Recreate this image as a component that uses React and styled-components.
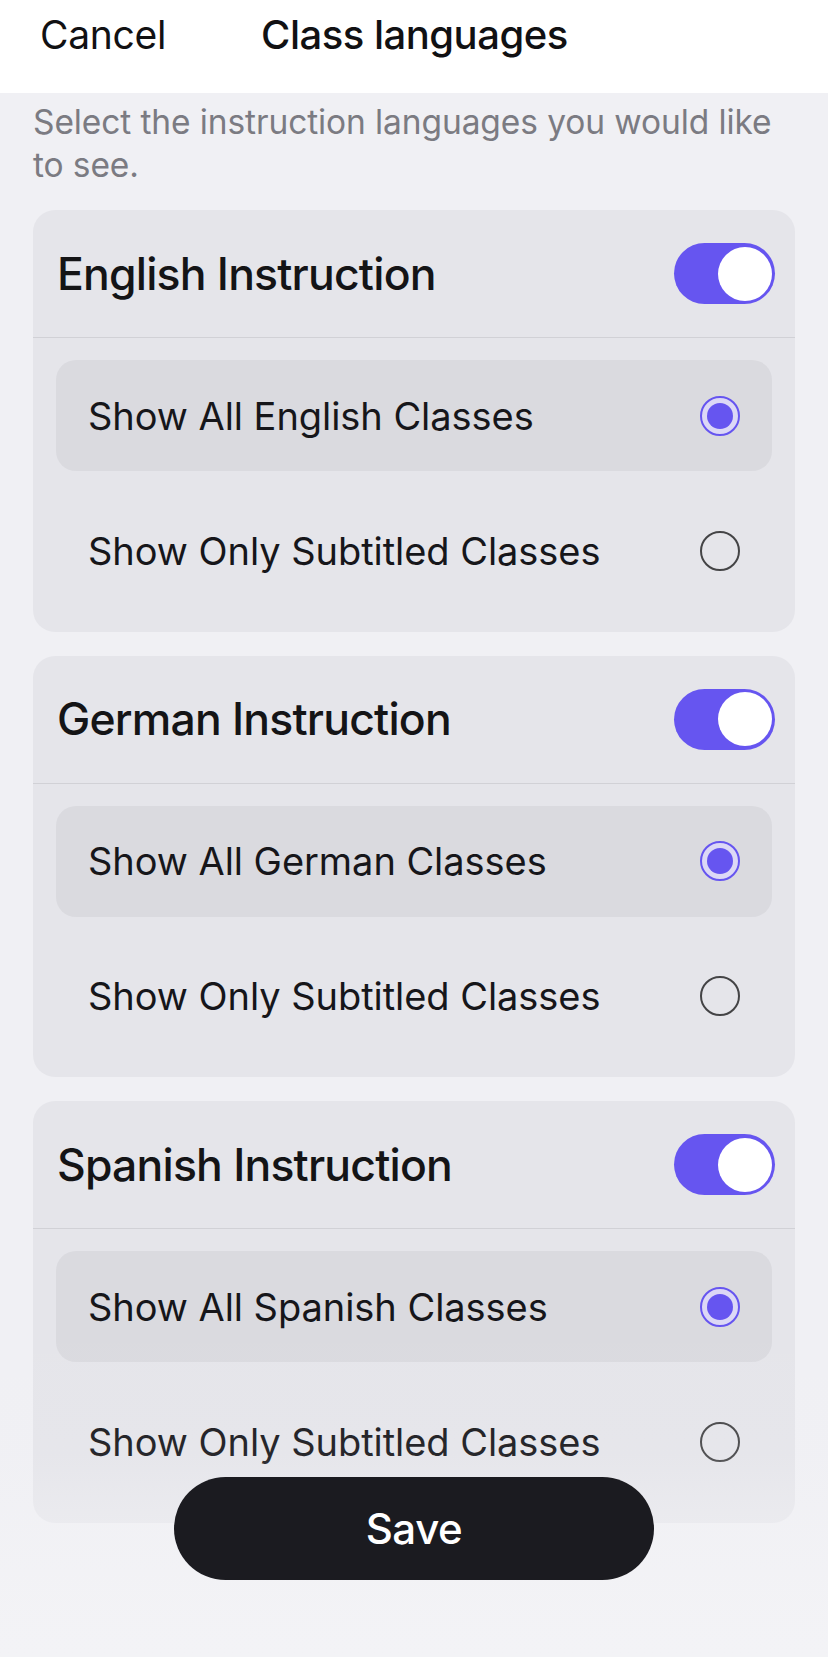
import React, { useState } from "react";
import styled, { createGlobalStyle } from "styled-components";

const GlobalStyle = createGlobalStyle`
  html, body { margin: 0; padding: 0; background: #f0f0f4; }
  body { font-family: Inter, "Noto Sans", "Liberation Sans", sans-serif; -webkit-font-smoothing: antialiased; }
  * { box-sizing: border-box; }
`;

const Screen = styled.div`
  position: relative;
  min-height: 1657px;
  background: #f0f0f4;
  overflow: hidden;
`;

const TopBar = styled.header`
  height: 93px;
  background: #ffffff;
  display: flex;
  align-items: flex-start;
  padding: 11px 0 0 40px;
  gap: 95px;
`;

const CancelButton = styled.button`
  border: 0;
  background: none;
  padding: 0;
  font-family: inherit;
  font-size: 39px;
  font-weight: 400;
  line-height: 48px;
  color: #111113;
  letter-spacing: -0.3px;
`;

const Title = styled.h1`
  margin: 0;
  font-size: 40px;
  font-weight: 500;
  line-height: 48px;
  color: #111113;
  letter-spacing: -0.5px;
`;

const Content = styled.main`
  padding: 8px 33px 0;
  display: flex;
  flex-direction: column;
`;

const Description = styled.p`
  margin: 0 0 24px;
  max-width: 758px;
  font-size: 33.5px;
  line-height: 42.5px;
  color: #7b7b82;
  letter-spacing: -0.1px;
`;

const CardList = styled.div`
  display: flex;
  flex-direction: column;
  gap: 24px;
`;

const Card = styled.section`
  background: #e5e5ea;
  border-radius: 22px;
  overflow: hidden;
`;

const CardHeader = styled.div`
  height: 128px;
  display: flex;
  align-items: center;
  justify-content: space-between;
  padding: 0 20px 0 24px;
  border-bottom: 1.5px solid #d1d1d6;
`;

const CardTitle = styled.h2`
  margin: 0;
  font-size: 44.5px;
  font-weight: 500;
  color: #141416;
  letter-spacing: -0.8px;
`;

const Switch = styled.button`
  width: 101px;
  height: 61px;
  border-radius: 31px;
  border: 0;
  padding: 0 3.5px;
  background: ${(p) => (p.$on ? "#6655f0" : "#c8c8cc")};
  display: flex;
  align-items: center;
  justify-content: ${(p) => (p.$on ? "flex-end" : "flex-start")};
  cursor: pointer;
`;

const Knob = styled.span`
  width: 54px;
  height: 54px;
  border-radius: 50%;
  background: #ffffff;
`;

const Options = styled.div`
  display: flex;
  flex-direction: column;
  gap: 24px;
  padding: 22px 23px 25.5px;
`;

const OptionRow = styled.label`
  height: 111px;
  border-radius: 20px;
  background: ${(p) => (p.$selected ? "#dadadf" : "transparent")};
  display: flex;
  align-items: center;
  justify-content: space-between;
  padding: 0 32px 0 32px;
  cursor: pointer;
`;

const OptionText = styled.span`
  font-size: 38px;
  font-weight: 400;
  color: #16161a;
  letter-spacing: -0.05px;
`;

const Radio = styled.span`
  width: 40px;
  height: 40px;
  border-radius: 50%;
  border: 2.5px solid ${(p) => (p.$checked ? "#6655f0" : "#444446")};
  background: ${(p) => (p.$checked ? "#dcd8f6" : "transparent")};
  display: flex;
  align-items: center;
  justify-content: center;
`;

const RadioDot = styled.span`
  width: 26px;
  height: 26px;
  border-radius: 50%;
  background: #6655f0;
`;

const FooterFade = styled.div`
  position: absolute;
  left: 0;
  right: 0;
  bottom: 0;
  height: 337px;
  background: linear-gradient(
    to bottom,
    rgba(243, 243, 246, 0) 0%,
    rgba(243, 243, 246, 0.08) 40%,
    rgba(243, 243, 246, 0.4) 60%,
    rgba(243, 243, 246, 0.9) 88%,
    #f3f3f6 100%
  );
  display: flex;
  justify-content: center;
  align-items: flex-end;
  padding-bottom: 77px;
  pointer-events: none;
`;

const SaveButton = styled.button`
  pointer-events: auto;
  width: 480px;
  height: 103px;
  border-radius: 52px;
  border: 0;
  background: #1b1b20;
  color: #ffffff;
  font-family: inherit;
  font-size: 42px;
  font-weight: 500;
  letter-spacing: -0.4px;
  cursor: pointer;
`;

const LANGS = [
  { id: "en", title: "English Instruction", all: "Show All English Classes" },
  { id: "de", title: "German Instruction", all: "Show All German Classes" },
  { id: "es", title: "Spanish Instruction", all: "Show All Spanish Classes" },
];

function LanguageCard({ lang }) {
  const [on, setOn] = useState(true);
  const [choice, setChoice] = useState("all");
  const opts = [
    { key: "all", label: lang.all },
    { key: "sub", label: "Show Only Subtitled Classes" },
  ];
  return (
    <Card>
      <CardHeader>
        <CardTitle>{lang.title}</CardTitle>
        <Switch $on={on} onClick={() => setOn(!on)} aria-pressed={on}>
          <Knob />
        </Switch>
      </CardHeader>
      <Options>
        {opts.map((o) => (
          <OptionRow
            key={o.key}
            $selected={choice === o.key}
            onClick={() => setChoice(o.key)}
          >
            <OptionText>{o.label}</OptionText>
            <Radio $checked={choice === o.key}>
              {choice === o.key && <RadioDot />}
            </Radio>
          </OptionRow>
        ))}
      </Options>
    </Card>
  );
}

export default function App() {
  return (
    <Screen>
      <GlobalStyle />
      <TopBar>
        <CancelButton>Cancel</CancelButton>
        <Title>Class languages</Title>
      </TopBar>
      <Content>
        <Description>
          Select the instruction languages you would like to see.
        </Description>
        <CardList>
          {LANGS.map((l) => (
            <LanguageCard key={l.id} lang={l} />
          ))}
        </CardList>
      </Content>
      <FooterFade>
        <SaveButton>Save</SaveButton>
      </FooterFade>
    </Screen>
  );
}
